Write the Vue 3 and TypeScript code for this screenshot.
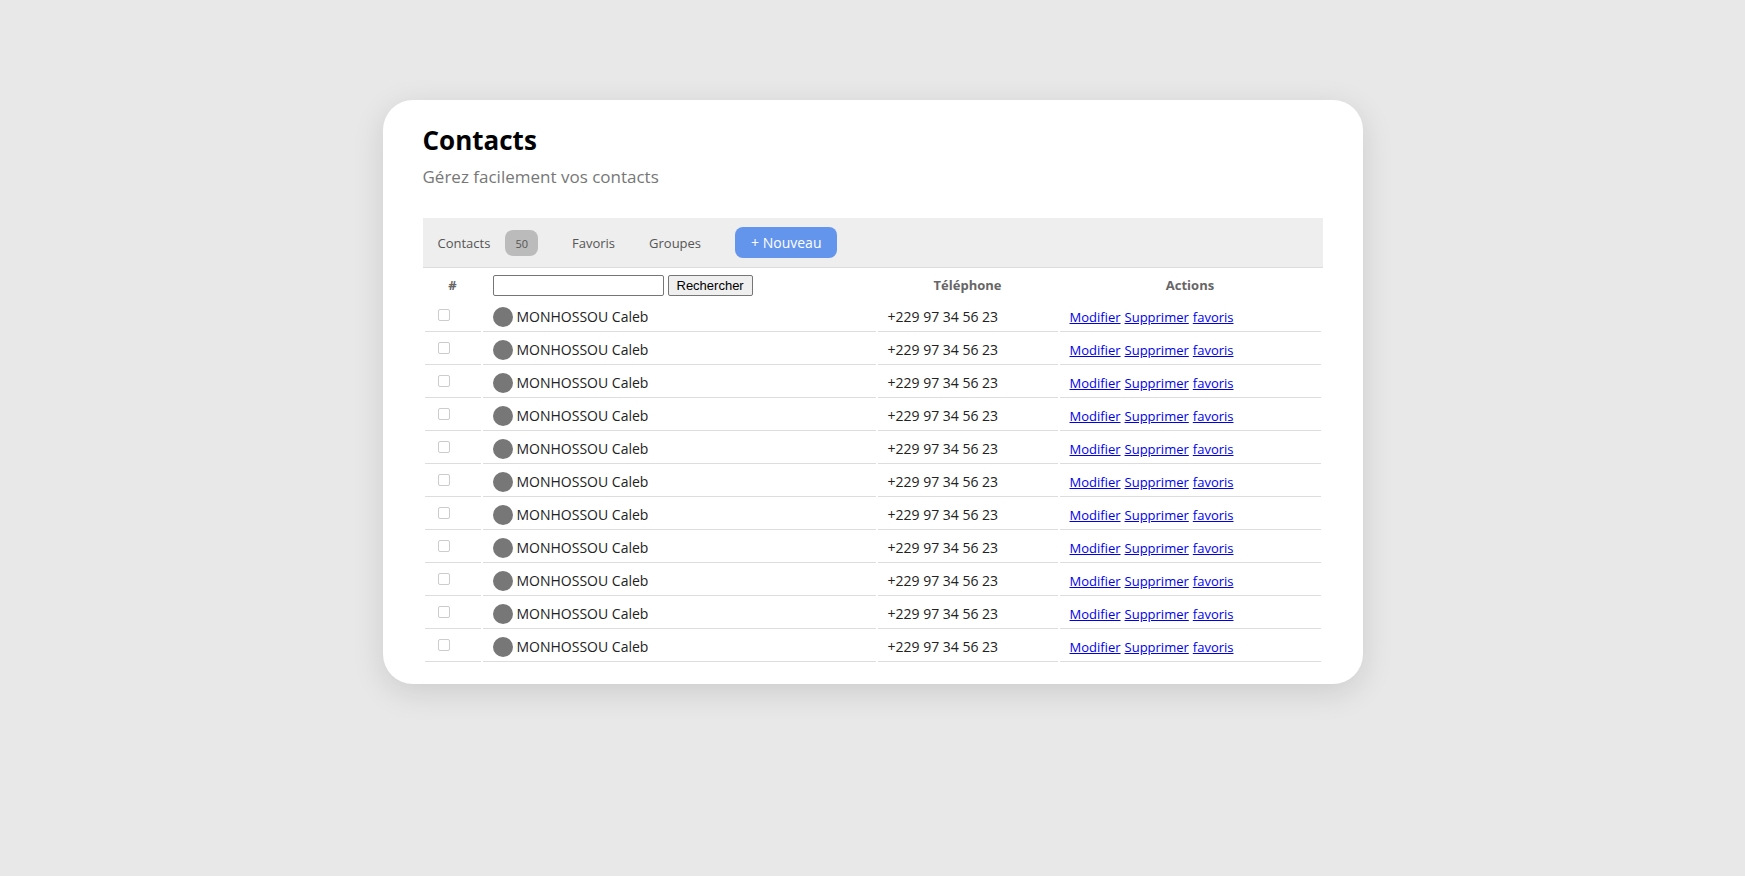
<script setup lang="ts">
import { ref } from 'vue'

interface Contact {
  id: number
  name: string
  phone: string
  selected: boolean
}

const contacts = ref<Contact[]>(
  Array.from({ length: 11 }, (_, i) => ({
    id: i + 1,
    name: 'MONHOSSOU Caleb',
    phone: '+229 97 34 56 23',
    selected: false,
  })),
)
const total = 50
const query = ref('')
</script>

<template>
  <main class="card">
    <h1>Contacts</h1>
    <p class="subtitle">Gérez facilement vos contacts</p>

    <nav class="toolbar">
      <a class="tab" href="#contacts">Contacts <span class="badge">{{ total }}</span></a>
      <a class="tab" href="#favoris">Favoris</a>
      <a class="tab" href="#groupes">Groupes</a>
      <button class="new" type="button">+ Nouveau</button>
    </nav>

    <table>
      <colgroup>
        <col class="col-check" />
        <col />
        <col class="col-phone" />
        <col class="col-actions" />
      </colgroup>
      <thead>
        <tr>
          <th scope="col">#</th>
          <th scope="col">
            <form class="search" @submit.prevent>
              <input v-model="query" type="text" aria-label="Rechercher un contact" />
              <button type="submit">Rechercher</button>
            </form>
          </th>
          <th scope="col">Téléphone</th>
          <th scope="col">Actions</th>
        </tr>
      </thead>
      <tbody>
        <tr v-for="contact in contacts" :key="contact.id">
          <td>
            <input v-model="contact.selected" class="check" type="checkbox" :aria-label="contact.name" />
          </td>
          <td>
            <div class="person"><span class="avatar"></span>{{ contact.name }}</div>
          </td>
          <td>{{ contact.phone }}</td>
          <td>
            <div class="actions">
              <a href="#modifier">Modifier</a>
              <a href="#supprimer">Supprimer</a>
              <a href="#favori">favoris</a>
            </div>
          </td>
        </tr>
      </tbody>
    </table>
  </main>
</template>

<style>
body {
  margin: 0;
  background: #e8e8e8;
}
</style>

<style scoped>
.card {
  box-sizing: border-box;
  max-width: 980px;
  margin: 100px auto;
  padding: 20px 40px;
  border-radius: 30px;
  background: #fff;
  box-shadow: 0 8px 32px rgba(0, 0, 0, 0.12);
  font-family: "Open Sans", "Noto Sans", sans-serif;
  font-size: 13px;
  color: #222;
}

h1 {
  margin: 0;
  font-size: 26px;
  line-height: 40px;
  color: #000;
}

.subtitle {
  margin: 4px 0 28px;
  font-size: 17px;
  line-height: 26px;
  color: #777;
}

.toolbar {
  display: flex;
  align-items: center;
  gap: 34px;
  height: 49px;
  padding: 0 15px;
  border-bottom: 1px solid #ddd;
  background: #eee;
}

.tab {
  display: flex;
  align-items: center;
  gap: 15px;
  color: #555;
  text-decoration: none;
}

.badge {
  padding: 2px 10px 0;
  border-radius: 8px;
  background: #bbb;
  font-size: 11px;
  line-height: 24px;
}

.new {
  padding: 1px 16px 0;
  border: 0;
  border-radius: 8px;
  background: #6495ed;
  color: #fff;
  font: inherit;
  font-size: 14px;
  line-height: 30px;
}

table {
  width: 100%;
  table-layout: fixed;
  border-spacing: 2px;
}

.col-check {
  width: 56px;
}

.col-phone {
  width: 180px;
}

.col-actions {
  width: 261px;
}

th {
  height: 28px;
  padding: 1px 10px 0;
  color: #666;
}

td {
  height: 28px;
  padding: 2px 10px 0;
  border-bottom: 1px solid #ddd;
  font-size: 14px;
  line-height: 20px;
}

.search {
  display: flex;
  gap: 4px;
}

.search input,
.search button {
  box-sizing: border-box;
  height: 21px;
  border: 1px solid #767676;
  border-radius: 2px;
  font: 13px "Liberation Sans", Arial, sans-serif;
}

.search input {
  width: 171px;
  padding: 1px 2px;
}

.search button {
  padding: 0 8px;
  background: #efefef;
  color: #000;
}

.check {
  appearance: none;
  display: block;
  box-sizing: border-box;
  width: 12px;
  height: 12px;
  margin: 0 3px 4px;
  border: 1px solid #ccc;
  border-radius: 2px;
  background: #fff;
}

.check:checked {
  background: #6495ed;
}

.person {
  display: flex;
  align-items: center;
  gap: 4px;
}

.avatar {
  width: 20px;
  height: 20px;
  border-radius: 50%;
  background: #777;
}

.actions {
  display: flex;
  gap: 4px;
  font-size: 13px;
}

.actions a {
  color: #00e;
}
</style>
